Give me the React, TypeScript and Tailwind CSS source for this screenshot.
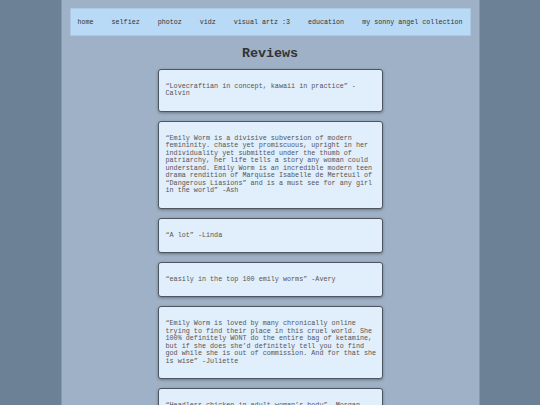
// Reviews page — retro blue column, nav strip, stacked review cards

const NAV = [
  "home",
  "selfiez",
  "photoz",
  "vidz",
  "visual artz :3",
  "education",
  "my sonny angel collection",
];

const REVIEWS = [
  "\u201cLovecraftian in concept, kawaii in practice\u201d - Calvin",
  "\u201cEmily Worm is a divisive subversion of modern femininity. chaste yet promiscuous, upright in her individuality yet submitted under the thumb of patriarchy, her life tells a story any woman could understand. Emily Worm is an incredible modern teen drama rendition of Marquise Isabelle de Merteuil of \u201cDangerous Liasions\u201d and is a must see for any girl in the world\u201d -Ash",
  "\u201cA lot\u201d -Linda",
  "\u201ceasily in the top 100 emily worms\u201d -Avery",
  "\u201cEmily Worm is loved by many chronically online trying to find their place in this cruel world. She 100% definitely WONT do the entire bag of ketamine, but if she does she\u2019d definitely tell you to find god while she is out of commission. And for that she is wise\u201d -Juliette",
  "\u201cHeadless chicken in adult woman\u2019s body\u201d -Morgan",
];

export default function App() {
  return (
    <div className="min-h-screen bg-[#6c8196] font-['Liberation_Mono','Courier_New',monospace]">
      <div className="mx-auto w-[419px] min-h-screen bg-[#9fb1c6] border-x border-[#8699ae] px-[8px] pt-[8px] pb-4">
        {/* nav strip */}
        <nav className="h-[28px] bg-[#b9daf6] border border-[#acc9e4] flex items-center justify-center gap-[18px] text-[6.7px] text-[#333]">
          {NAV.map((n) => (
            <span key={n} className="whitespace-pre">
              {n}
            </span>
          ))}
        </nav>

        <h1 className="mt-[9px] text-center text-[13.4px] font-bold text-[#333] leading-[18px]">
          Reviews
        </h1>

        <section className="mt-[6px] flex flex-col items-center gap-[9px]">
          {REVIEWS.map((r, i) => (
            <div
              key={i}
              className="w-[225px] bg-[#e1eefc] border border-[#4d5660] rounded-[3px] pl-[7px] pr-[3px] py-[13px] shadow-[0_1px_3px_rgba(0,0,0,0.35)]"
            >
              <p className="text-[6.75px] leading-[7.45px] text-[#555]">{r}</p>
            </div>
          ))}
        </section>
      </div>
    </div>
  );
}
